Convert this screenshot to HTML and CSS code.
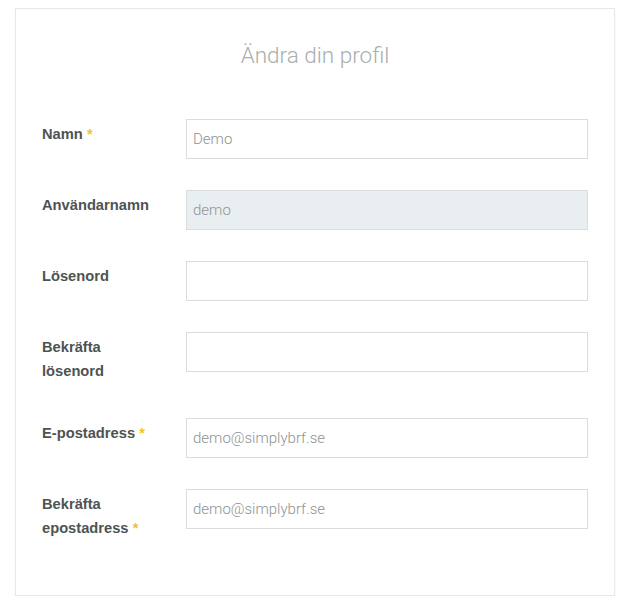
FILE: index.html
```html
<!DOCTYPE html>
<html lang="sv">
<head>
    <meta charset="UTF-8">
    <meta name="viewport" content="width=device-width, initial-scale=1.0">
    <title>Ändra din profil</title>
    <link rel="stylesheet" href="styles.css">
</head>
<body>
    <div class="card">
        <h1 class="title">Ändra din profil</h1>

        <form id="profile-form">
            <div class="form-row">
                <label for="name">Namn <span class="req">*</span></label>
                <input type="text" id="name" value="Demo">
            </div>

            <div class="form-row">
                <label for="username">Användarnamn</label>
                <input type="text" id="username" value="demo" disabled>
            </div>

            <div class="form-row">
                <label for="password">Lösenord</label>
                <input type="password" id="password">
            </div>

            <div class="form-row">
                <label for="password2">Bekräfta lösenord</label>
                <input type="password" id="password2">
            </div>

            <div class="form-row">
                <label for="email">E-postadress <span class="req">*</span></label>
                <input type="email" id="email" value="demo@simplybrf.se">
            </div>

            <div class="form-row">
                <label for="email2">Bekräfta epostadress <span class="req">*</span></label>
                <input type="email" id="email2" value="demo@simplybrf.se">
            </div>
        </form>
    </div>
</body>
</html>
```

FILE: styles.css
```css
body {
    margin: 0;
    padding: 8px 13px 0 15px;
    background-color: #fff;
    font-family: "Liberation Sans", Arial, sans-serif;
}

.card {
    width: 600px;
    box-sizing: border-box;
    border: 1px solid #e4e9e9;
    box-shadow: 0 1px 2px rgba(0, 0, 0, 0.05);
    padding: 31px 26px 20px;
}

.title {
    margin: 0 0 49px;
    font-family: Roboto, sans-serif;
    font-weight: 300;
    font-size: 22.5px;
    line-height: 30px;
    text-align: center;
    color: #a9aeae;
}

.form-row {
    display: grid;
    grid-template-columns: 144px 1fr;
    align-items: start;
    margin-bottom: 31px;
}

label {
    padding: 3px 26px 4px 0;
    font-weight: bold;
    font-size: 14.7px;
    line-height: 24px;
    color: #4d5351;
}

.req {
    color: #f5c518; /* gul */
}

input {
    height: 40px;
    box-sizing: border-box;
    width: 100%;
    margin: 0;
    padding: 0 6px;
    border: 1px solid #dcdcdc;
    border-radius: 0;
    background-color: #fff;
    font-family: Roboto, sans-serif;
    font-weight: 300;
    font-size: 15px;
    color: #8f9292;
    outline: none;
}

input:disabled {
    background-color: #e9eef0;
    color: #929697;
}
```
